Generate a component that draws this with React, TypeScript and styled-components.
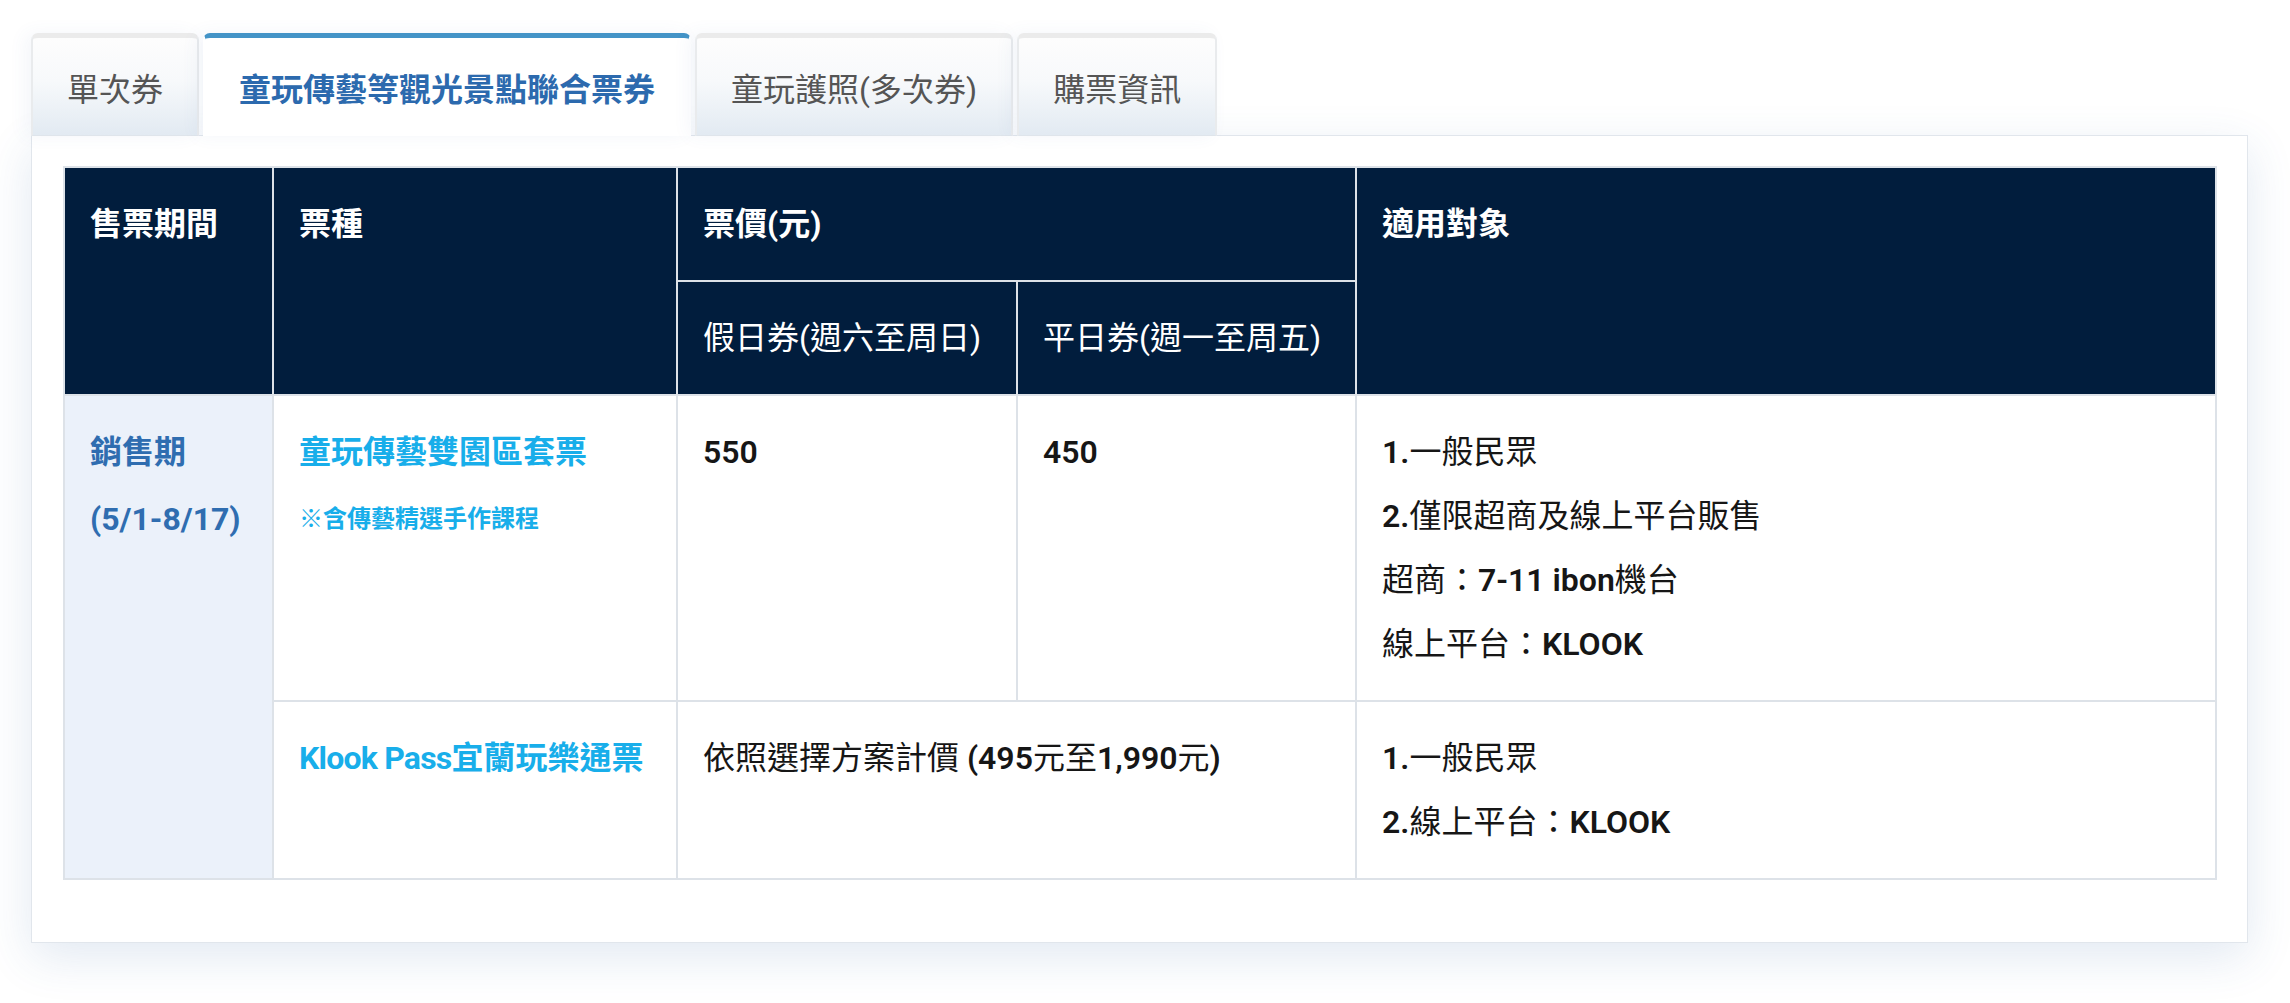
import React from "react";
import styled, { createGlobalStyle } from "styled-components";

const Global = createGlobalStyle`
  html, body { margin: 0; padding: 0; background: #ffffff; }
  body { font-family: "Roboto", "Noto Sans CJK TC", sans-serif; }
`;

const Page = styled.div`
  padding: 33px 42px 60px 31px;
`;

const Card = styled.div`
  display: flex;
  flex-direction: column;
`;

const TabBar = styled.div`
  display: flex;
  gap: 4px;
  align-items: flex-end;
  margin-bottom: -1px;
`;

const Tab = styled.div<{ $active?: boolean }>`
  position: relative;
  box-sizing: border-box;
  height: 103px;
  padding: 0 34px;
  display: flex;
  align-items: center;
  justify-content: center;
  font-size: 32px;
  white-space: nowrap;
  border-radius: 7px 7px 0 0;
  border-top: 5px solid ${(p) => (p.$active ? "#4494c7" : "#ebebeb")};
  border-left: 2px solid ${(p) => (p.$active ? "#ffffff" : "#e9ebed")};
  border-right: 2px solid ${(p) => (p.$active ? "#ffffff" : "#e9ebed")};
  border-bottom: 1px solid ${(p) => (p.$active ? "#ffffff" : "#dfe5eb")};
  background: ${(p) =>
    p.$active
      ? "#ffffff"
      : "linear-gradient(180deg, #fdfdfd 0%, #f7f9fb 45%, #e2eaf2 100%)"};
  color: ${(p) => (p.$active ? "#2c6aae" : "#555555")};
  font-weight: ${(p) => (p.$active ? 700 : 400)};
  box-shadow: -6px 0 18px rgba(60, 110, 170, 0.06);
`;

const Panel = styled.div`
  background: #ffffff;
  border: 1px solid #e1e6ec;
  padding: 30px 30px 62px 31px;
  box-shadow: 0 14px 44px rgba(50, 100, 160, 0.14);
`;

const Table = styled.table`
  width: 100%;
  border-collapse: collapse;
  table-layout: fixed;
  font-size: 32px;
  line-height: 64px;
  color: #161616;
`;

const Th = styled.th<{ $bold?: boolean }>`
  background: #011d3d;
  color: #ffffff;
  text-align: left;
  vertical-align: top;
  padding: 24px 25px;
  font-weight: ${(p) => (p.$bold ? 700 : 400)};
  border: 2px solid #dde2e8;
`;

const Td = styled.td<{ $tint?: boolean }>`
  text-align: left;
  vertical-align: top;
  padding: 24px 25px;
  border: 2px solid #dde2e8;
  background: ${(p) => (p.$tint ? "#ebf1fa" : "#ffffff")};
`;

const Period = styled.div`
  color: #2f6db0;
  font-weight: 700;
  & + & {
    margin-top: 3px;
  }
`;

const TicketName = styled.div`
  color: #18aeea;
  font-weight: 700;
  white-space: nowrap;
`;

const NameLatin = styled.span`
  letter-spacing: -0.8px;
`;

const TicketNote = styled.div`
  color: #18aeea;
  font-weight: 700;
  font-size: 24px;
  margin-top: 3px;
`;

const Price = styled.div`
  font-weight: 600;
`;

const Line = styled.div``;

const Latin = styled.span`
  font-weight: 600;
`;

const tabs = ["單次券", "童玩傳藝等觀光景點聯合票券", "童玩護照(多次券)", "購票資訊"];

export default function App() {
  return (
    <>
      <Global />
      <Page>
        <Card>
          <TabBar>
            {tabs.map((t, i) => (
              <Tab key={t} $active={i === 1}>
                {t}
              </Tab>
            ))}
          </TabBar>
          <Panel>
            <Table>
              <colgroup>
                <col style={{ width: 209 }} />
                <col style={{ width: 404 }} />
                <col style={{ width: 340 }} />
                <col style={{ width: 339 }} />
                <col />
              </colgroup>
              <thead>
                <tr>
                  <Th $bold rowSpan={2}>售票期間</Th>
                  <Th $bold rowSpan={2}>票種</Th>
                  <Th $bold colSpan={2}>票價(元)</Th>
                  <Th $bold rowSpan={2}>適用對象</Th>
                </tr>
                <tr>
                  <Th>假日券(週六至周日)</Th>
                  <Th>平日券(週一至周五)</Th>
                </tr>
              </thead>
              <tbody>
                <tr>
                  <Td $tint rowSpan={2}>
                    <Period>銷售期</Period>
                    <Period>(5/1-8/17)</Period>
                  </Td>
                  <Td>
                    <TicketName>童玩傳藝雙園區套票</TicketName>
                    <TicketNote>※含傳藝精選手作課程</TicketNote>
                  </Td>
                  <Td>
                    <Price>550</Price>
                  </Td>
                  <Td>
                    <Price>450</Price>
                  </Td>
                  <Td>
                    <Line><Latin>1.</Latin>一般民眾</Line>
                    <Line><Latin>2.</Latin>僅限超商及線上平台販售</Line>
                    <Line>超商：<Latin>7-11 ibon</Latin>機台</Line>
                    <Line>線上平台：<Latin>KLOOK</Latin></Line>
                  </Td>
                </tr>
                <tr>
                  <Td>
                    <TicketName><NameLatin>Klook Pass</NameLatin>宜蘭玩樂通票</TicketName>
                  </Td>
                  <Td colSpan={2}>
                    <Line>
                      依照選擇方案計價 <Latin>(495</Latin>元至<Latin>1,990</Latin>元<Latin>)</Latin>
                    </Line>
                  </Td>
                  <Td>
                    <Line><Latin>1.</Latin>一般民眾</Line>
                    <Line><Latin>2.</Latin>線上平台：<Latin>KLOOK</Latin></Line>
                  </Td>
                </tr>
              </tbody>
            </Table>
          </Panel>
        </Card>
      </Page>
    </>
  );
}
